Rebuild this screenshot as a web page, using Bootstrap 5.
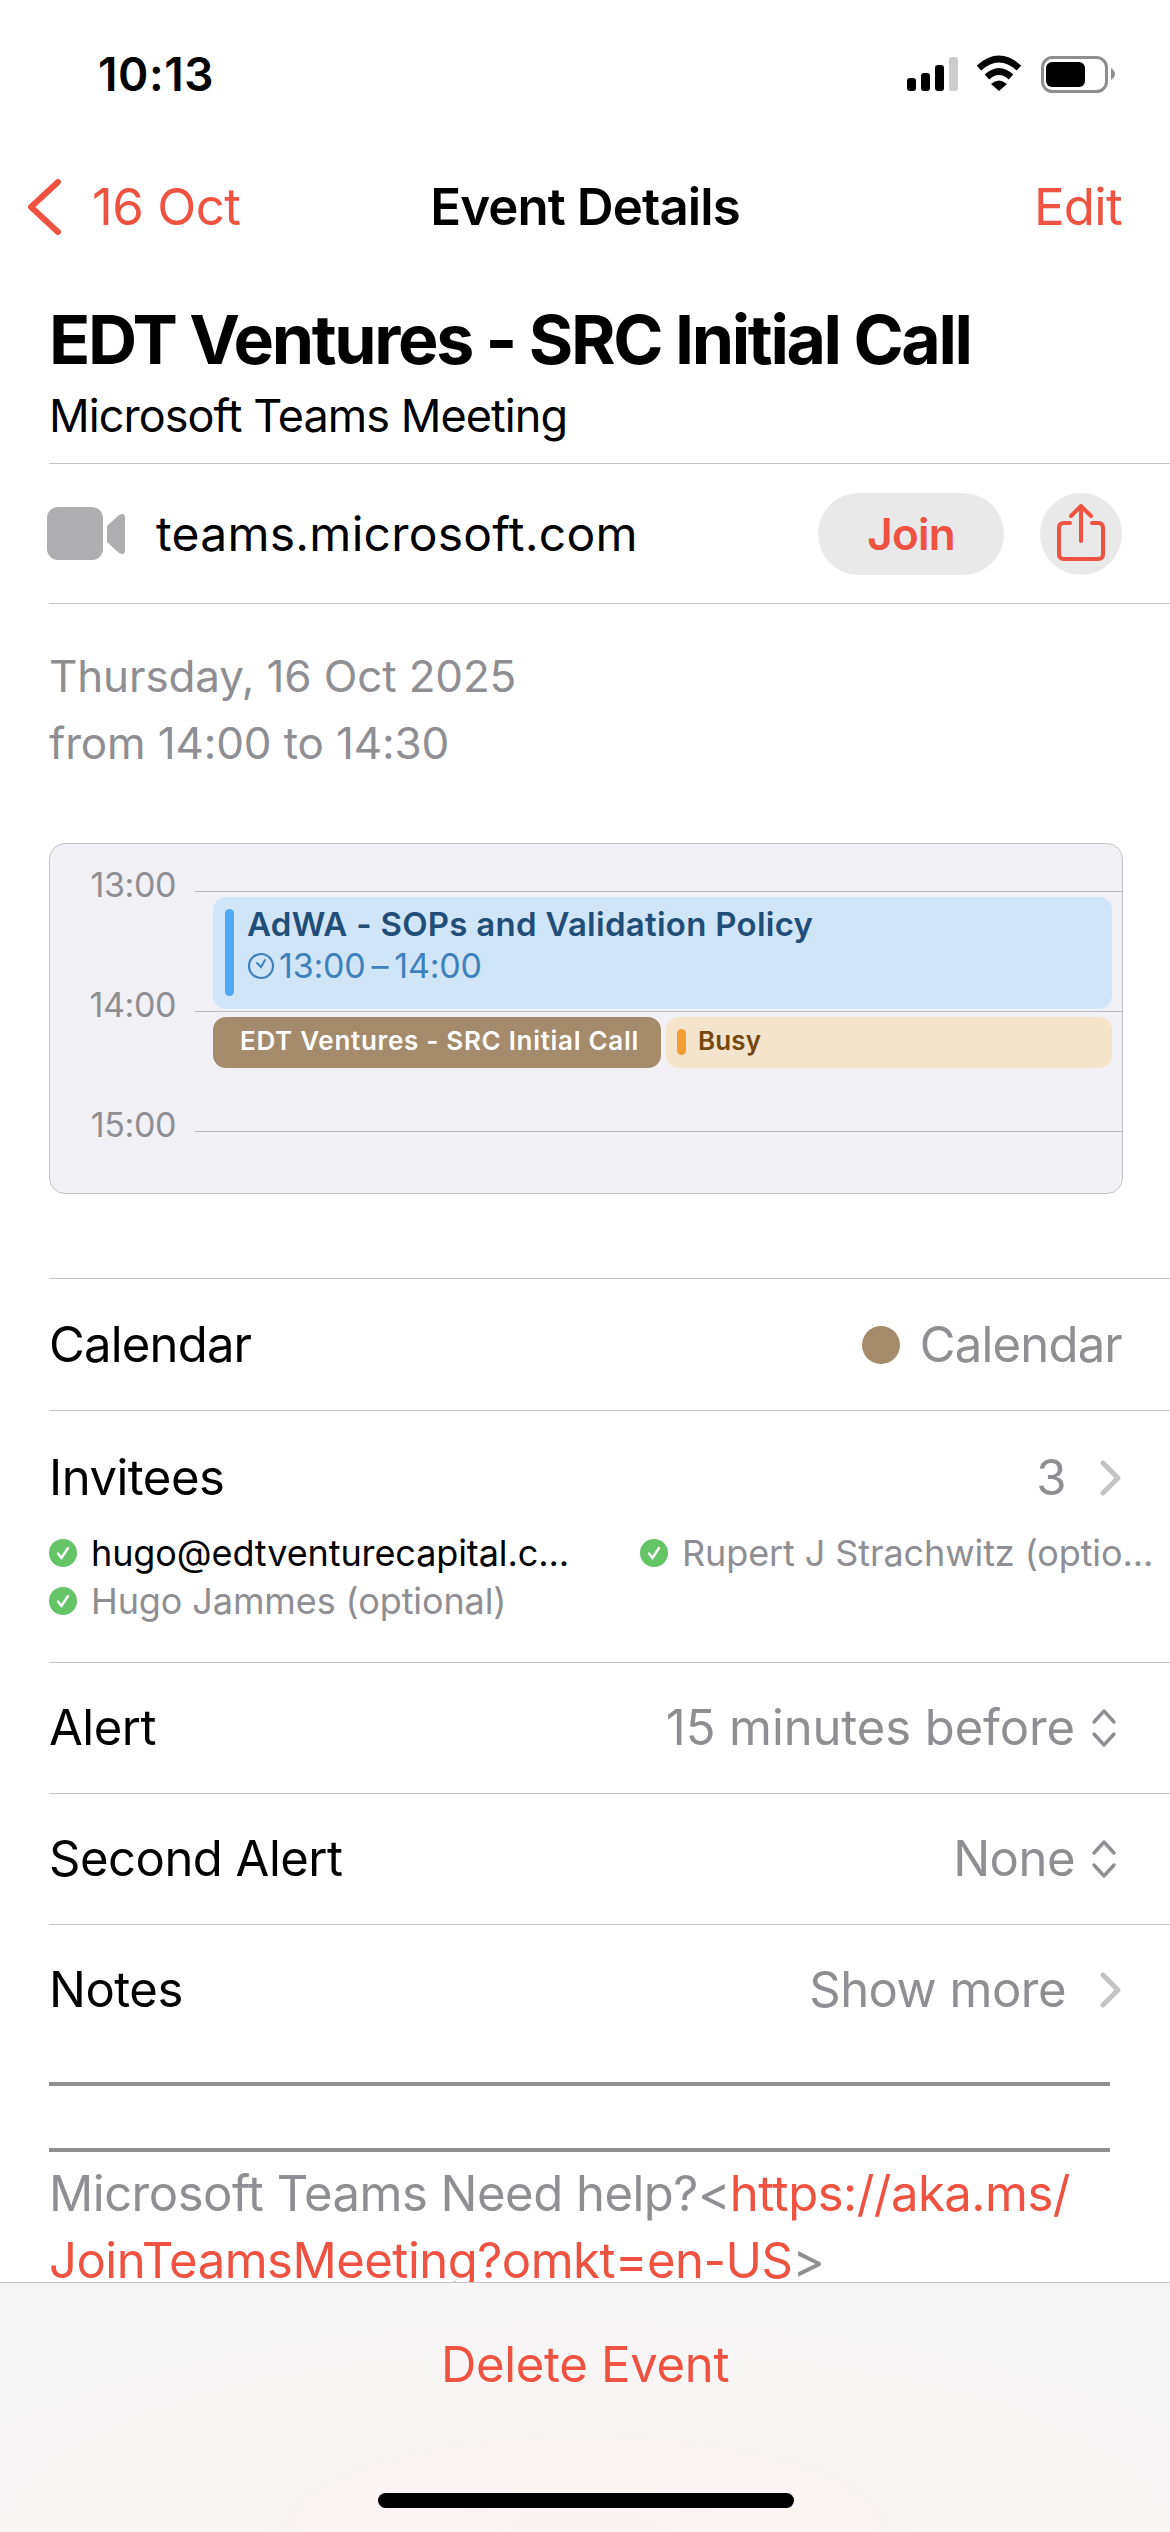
<!DOCTYPE html>
<html lang="en">
<head>
<meta charset="UTF-8">
<meta name="viewport" content="width=device-width, initial-scale=1.0">
<title>Event Details</title>
<link href="https://cdn.jsdelivr.net/npm/bootstrap@5.3.0/dist/css/bootstrap.min.css" rel="stylesheet">
<style>
  html, body { margin: 0; height: 2532px; overflow: hidden; background: #fff; }
  body { font-family: Inter, "Liberation Sans", sans-serif; color: #000; }
  .screen { width: 1170px; height: 2532px; }
  .red-txt { color: #ef5241; }
  .grey-txt { color: #8e8e93; }

  .status-bar { height: 148px; padding: 0 55px 0 98px; }
  .status-time { font-size: 46px; font-weight: 600; letter-spacing: .6px; line-height: 1; }

  .top-nav { height: 118px; padding: 0 48px 0 28px; position: relative; }
  .top-nav .back-lbl { font-size: 51px; letter-spacing: -.5px; margin-left: 28px; }
  .top-nav .nav-title { position: absolute; left: 0; right: 0; text-align: center; font-size: 51px; font-weight: 600; letter-spacing: -.9px; }
  .top-nav .edit-lbl { font-size: 51px; letter-spacing: -.7px; }

  .detail-wrap { padding-left: 49px; }
  .ev-title { font-size: 68px; font-weight: 700; letter-spacing: -2.35px; line-height: 80px; margin: 0; padding-top: 33px; }
  .ev-sub { font-size: 45px; letter-spacing: -.95px; line-height: 56px; margin-top: 9px; padding-bottom: 19px; }
  .link-row { height: 141px; border-top: 1px solid #c6c6c8; border-bottom: 1px solid #c6c6c8; padding-right: 48px; }
  .link-row > svg { margin-left: -2px; }
  .link-row .site-txt { font-size: 48px; letter-spacing: .25px; margin-left: 31px; }
  .pill-join { width: 186px; height: 82px; border-radius: 41px; background: #e9e9ea; border: 0; color: #ef5241; font-size: 44px; font-weight: 600; letter-spacing: -.8px; padding: 0; }
  .pill-share { width: 82px; height: 82px; border-radius: 50%; background: #e9e9ea; margin-left: 36px; }

  .when-txt { font-size: 44px; letter-spacing: -.15px; line-height: 67px; padding-top: 39px; color: #8e8e93; }

  .day-box { width: 1074px; height: 351px; margin-top: 66px; background: #f1f0f5; border: 1px solid #c4c4c8; border-radius: 16px; position: relative; overflow: hidden; }
  .hour-row { height: 120px; align-items: flex-start; }
  .hour-row:first-child { margin-top: 47px; }
  .hour-lbl { width: 126px; font-size: 34px; color: #8e8e93; text-align: right; line-height: 1; margin-top: -23px; letter-spacing: -.4px; }
  .hour-line { flex: 1; height: 1px; background: #b9b9be; margin-left: 19px; }

  .cal-ev { position: absolute; border-radius: 13px; }
  .ev-blue { left: 163px; top: 53px; width: 899px; height: 112px; background: #d0e5f7; }
  .ev-brown { left: 163px; top: 173px; width: 448px; height: 51px; background: #a38b6c; color: #fff; font-size: 26px; font-weight: 600; line-height: 47px; padding-left: 27px; letter-spacing: .7px; white-space: nowrap; }
  .ev-busy { left: 616px; top: 173px; width: 446px; height: 51px; background: #f5e4cc; color: #76480f; font-size: 26px; font-weight: 600; line-height: 47px; padding-left: 32px; letter-spacing: .1px; }
  .ev-bar { position: absolute; border-radius: 5px; width: 9px; }
  .ev-blue .ev-bar { left: 12px; top: 12px; height: 87px; background: #4fa9f2; }
  .ev-busy .ev-bar { left: 11px; top: 12px; height: 26px; background: #f19f35; }
  .blue-title { position: absolute; left: 34px; top: 7px; font-size: 33px; font-weight: 600; color: #1f4e79; line-height: 40px; letter-spacing: .27px; white-space: nowrap; }
  .blue-time { position: absolute; left: 34px; top: 49px; font-size: 34px; color: #3d82bd; line-height: 40px; letter-spacing: -.2px; }

  .info-row { border-top: 1px solid #c6c6c8; height: 131px; padding-right: 48px; font-size: 49px; letter-spacing: -.5px; }
  .info-row.first-info { margin-top: 84px; height: 132px; letter-spacing: -.8px; }
  .info-row.invitee-head { height: 252px; display: block; }
  .invitee-line { height: 133px; margin-bottom: -9px; }
  .invitee-grid { display: grid; grid-template-columns: 591px 1fr; align-content: start; row-gap: 12px; font-size: 36px; letter-spacing: -.1px; line-height: 36px; margin-right: -48px; }
  .invitee-cell { display: flex; align-items: center; gap: 14px; white-space: nowrap; }
  .cal-dot { width: 38px; height: 38px; border-radius: 50%; background: #a38b6c; margin-right: 20px; }
  .row-chev { margin-left: 34px; }
  .row-updown { margin-left: 15px; margin-right: 4px; }
  .wide-val { letter-spacing: -.1px; }

  .notes-rule { height: 4px; background: #8e8e93; width: 1061px; }
  .notes-rule.rule-one { margin-top: 27px; }
  .notes-rule.rule-two { margin-top: 62px; }
  .notes-txt { font-size: 49px; line-height: 67px; letter-spacing: -.5px; color: #8e8e93; margin-top: 8px; white-space: nowrap; }

  .main-scroll { height: 2282px; overflow: hidden; }
  .bottom-bar { height: 250px; border-top: 1px solid #c6c6c8; background: radial-gradient(ellipse 700px 220px at 50% 100%, #fbf3f2, #f7f6f6); position: relative; }
  .delete-lbl { font-size: 49px; letter-spacing: -.3px; text-align: center; padding-top: 52px; line-height: 60px; }
  .home-bar { position: absolute; left: 378px; top: 210px; width: 416px; height: 15px; border-radius: 8px; background: #000; }
</style>
</head>
<body>
<div class="screen d-flex flex-column">
  <div class="main-scroll flex-shrink-0">
    <!-- status bar -->
    <div class="status-bar d-flex align-items-center justify-content-between">
      <span class="status-time">10:13</span>
      <svg width="208" height="38" viewBox="0 0 208 38">
        <rect x="0" y="23" width="9" height="13" rx="3"/>
        <rect x="14" y="18" width="9" height="18" rx="3"/>
        <rect x="28" y="10" width="9" height="26" rx="3"/>
        <rect x="42" y="2" width="9" height="34" rx="3" fill="#ccc"/>
        <g transform="translate(68,0)">
          <path d="M4 13Q24 -5 44 13" fill="none" stroke="#000" stroke-width="6.5"/>
          <path d="M12 22Q24 11 36 22" fill="none" stroke="#000" stroke-width="6.5"/>
          <path d="M16 29Q24 22 32 29L24 36Z"/>
        </g>
        <rect x="135.5" y="2.5" width="64" height="34" rx="10" fill="none" stroke="#8e8e8e" stroke-width="3"/>
        <rect x="139" y="7" width="39" height="25" rx="6"/>
        <path d="M204 13Q208 16 208 19Q208 22 204 25Z" fill="#8e8e8e"/>
      </svg>
    </div>

    <!-- nav -->
    <div class="top-nav d-flex align-items-center justify-content-between">
      <span class="d-flex align-items-center position-relative red-txt">
        <svg width="36" height="56" viewBox="0 0 36 56"><path d="M30 3L3 28L30 53" fill="none" stroke="#ef5241" stroke-width="6" stroke-linecap="round" stroke-linejoin="round"/></svg>
        <span class="back-lbl">16 Oct</span>
      </span>
      <span class="nav-title">Event Details</span>
      <span class="edit-lbl red-txt position-relative">Edit</span>
    </div>

    <div class="detail-wrap">
      <h1 class="ev-title">EDT Ventures - SRC Initial Call</h1>
      <div class="ev-sub">Microsoft Teams Meeting</div>

      <div class="link-row d-flex align-items-center">
        <svg width="78" height="54" viewBox="0 0 78 54"><rect x="0" y="0" width="56" height="53" rx="11" fill="#aeaeb0"/><path d="M60 19L72 8Q78 5 78 11V43Q78 49 72 46L60 35Z" fill="#aeaeb0"/></svg>
        <span class="site-txt flex-grow-1">teams.microsoft.com</span>
        <button class="pill-join" type="button">Join</button>
        <div class="pill-share d-flex align-items-center justify-content-center">
          <svg width="50" height="60" viewBox="0 0 50 60" fill="none" stroke="#ef5241" stroke-width="4" stroke-linecap="round" stroke-linejoin="round"><path d="M14 19H8Q3 19 3 24V50Q3 55 8 55H42Q47 55 47 50V24Q47 19 42 19H36"/><path d="M25 37V3M15 12L25 2L35 12"/></svg>
        </div>
      </div>

      <div class="when-txt">Thursday, 16 Oct 2025<br>from 14:00 to 14:30</div>

      <div class="day-box">
        <div class="hour-row d-flex"><div class="hour-lbl">13:00</div><div class="hour-line"></div></div>
        <div class="hour-row d-flex"><div class="hour-lbl">14:00</div><div class="hour-line"></div></div>
        <div class="hour-row d-flex"><div class="hour-lbl">15:00</div><div class="hour-line"></div></div>
        <div class="cal-ev ev-blue">
          <div class="ev-bar"></div>
          <div class="blue-title">AdWA - SOPs and Validation Policy</div>
          <div class="blue-time d-flex align-items-center">
            <svg class="me-1" width="28" height="30" viewBox="0 0 28 30" fill="none" stroke="#3d82bd" stroke-width="2.2"><circle cx="14" cy="15" r="12"/><path d="M10 12L14 16L18 9" stroke-width="2" stroke-linecap="round"/></svg>
            13:00&#8201;–&#8201;14:00
          </div>
        </div>
        <div class="cal-ev ev-brown">EDT Ventures - SRC Initial Call</div>
        <div class="cal-ev ev-busy"><div class="ev-bar"></div>Busy</div>
      </div>

      <div class="info-row first-info d-flex align-items-center justify-content-between">
        <span>Calendar</span>
        <span class="d-flex align-items-center grey-txt"><span class="cal-dot"></span>Calendar</span>
      </div>

      <div class="info-row invitee-head">
        <div class="invitee-line d-flex align-items-center justify-content-between">
          <span>Invitees</span>
          <span class="d-flex align-items-center grey-txt">3
            <svg class="row-chev" width="22" height="36" viewBox="0 0 22 36"><path d="M3 3L18 18L3 33" fill="none" stroke="#c4c4c6" stroke-width="5" stroke-linecap="round" stroke-linejoin="round"/></svg>
          </span>
        </div>
        <div class="invitee-grid">
          <div class="invitee-cell">
            <svg class="flex-shrink-0" width="28" height="28" viewBox="0 0 28 28"><circle cx="14" cy="14" r="14" fill="#65c466"/><path d="M9 14.5L12.5 19L19 9" fill="none" stroke="#fff" stroke-width="2.4" stroke-linecap="round"/></svg>
            <span>hugo@edtventurecapital.c...</span>
          </div>
          <div class="invitee-cell">
            <svg class="flex-shrink-0" width="28" height="28" viewBox="0 0 28 28"><circle cx="14" cy="14" r="14" fill="#65c466"/><path d="M9 14.5L12.5 19L19 9" fill="none" stroke="#fff" stroke-width="2.4" stroke-linecap="round"/></svg>
            <span class="grey-txt">Rupert J Strachwitz (optio...</span>
          </div>
          <div class="invitee-cell">
            <svg class="flex-shrink-0" width="28" height="28" viewBox="0 0 28 28"><circle cx="14" cy="14" r="14" fill="#65c466"/><path d="M9 14.5L12.5 19L19 9" fill="none" stroke="#fff" stroke-width="2.4" stroke-linecap="round"/></svg>
            <span class="grey-txt">Hugo Jammes (optional)</span>
          </div>
        </div>
      </div>

      <div class="info-row d-flex align-items-center justify-content-between">
        <span>Alert</span>
        <span class="d-flex align-items-center grey-txt wide-val">15 minutes before
          <svg class="row-updown" width="28" height="40" viewBox="0 0 28 40" fill="none" stroke="#8e8e93" stroke-width="3.4" stroke-linecap="round" stroke-linejoin="round"><path d="M4 14L14 3L24 14M4 26L14 37L24 26"/></svg>
        </span>
      </div>
      <div class="info-row d-flex align-items-center justify-content-between">
        <span>Second Alert</span>
        <span class="d-flex align-items-center grey-txt">None
          <svg class="row-updown" width="28" height="40" viewBox="0 0 28 40" fill="none" stroke="#8e8e93" stroke-width="3.4" stroke-linecap="round" stroke-linejoin="round"><path d="M4 14L14 3L24 14M4 26L14 37L24 26"/></svg>
        </span>
      </div>
      <div class="info-row d-flex align-items-center justify-content-between">
        <span>Notes</span>
        <span class="d-flex align-items-center grey-txt">Show more
          <svg class="row-chev" width="22" height="36" viewBox="0 0 22 36"><path d="M3 3L18 18L3 33" fill="none" stroke="#c4c4c6" stroke-width="5" stroke-linecap="round" stroke-linejoin="round"/></svg>
        </span>
      </div>

      <div class="notes-rule rule-one"></div>
      <div class="notes-rule rule-two"></div>
      <div class="notes-txt">Microsoft Teams Need help?&lt;<span class="red-txt">https://aka.ms/</span><br><span class="red-txt">JoinTeamsMeeting?omkt=en-US</span>&gt;</div>
    </div>
  </div>

  <div class="bottom-bar">
    <div class="delete-lbl red-txt">Delete Event</div>
    <div class="home-bar"></div>
  </div>
</div>
<script src="https://cdn.jsdelivr.net/npm/bootstrap@5.3.0/dist/js/bootstrap.bundle.min.js"></script>
</body>
</html>
